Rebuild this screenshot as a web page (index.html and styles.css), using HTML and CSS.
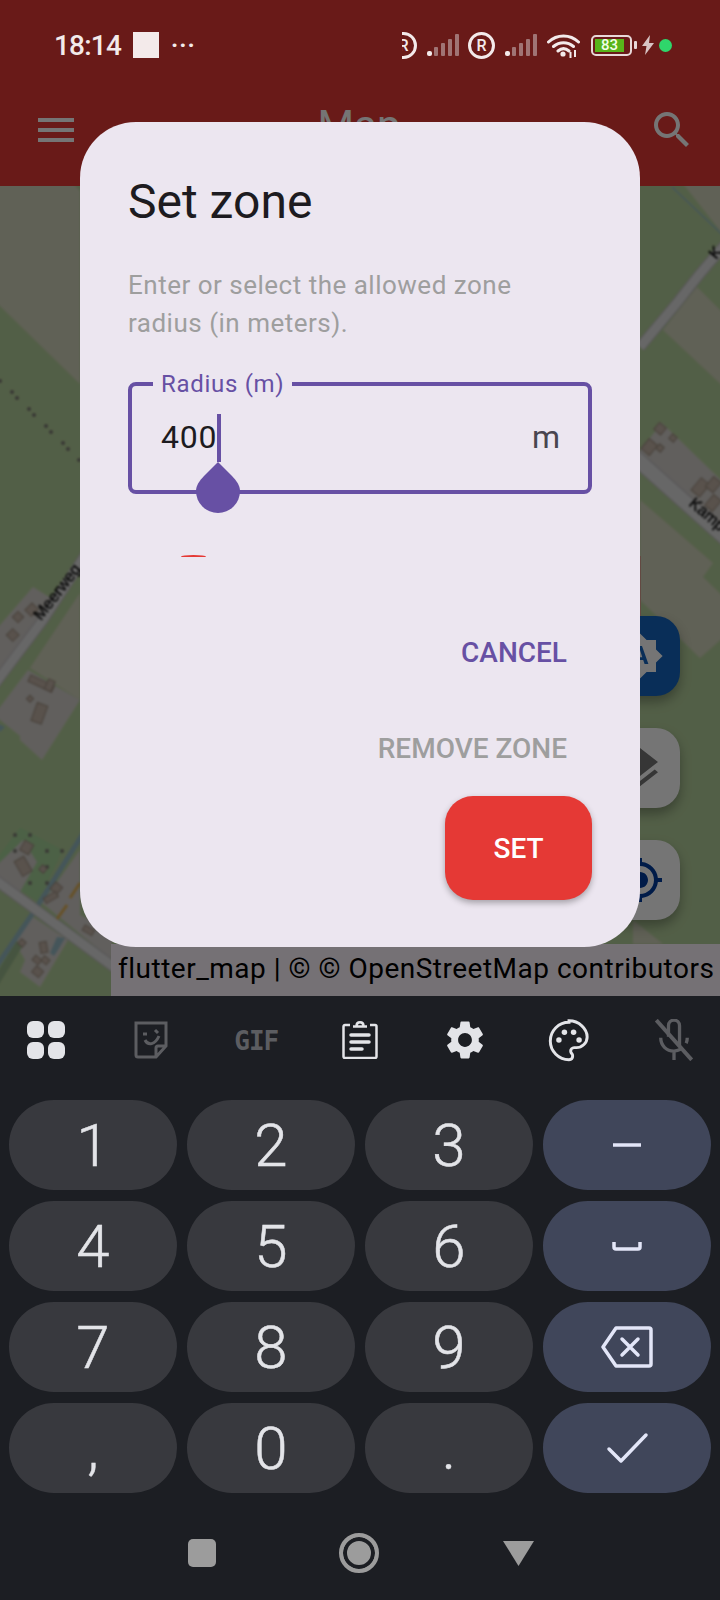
FILE: index.html
```html
<!DOCTYPE html>
<html lang="en">
<head>
    <meta charset="UTF-8">
    <meta name="viewport" content="width=device-width, initial-scale=1.0">
    <title>Map</title>
    <link rel="stylesheet" href="styles.css">
</head>
<body>
<div class="screen">
    <div class="app">
        <header class="header">
            <div class="status">
                <span class="time">18:14</span>
                <span class="status-box"></span>
                <span class="status-dots">···</span>
                <div class="status-right">
                    <div class="r-clip"><span class="r-mark">R</span></div>
                    <svg class="signal" viewBox="0 0 33 22">
                        <rect class="on" x="0" y="17" width="5" height="5" rx="2"/>
                        <rect class="off" x="7" y="13" width="4" height="9" rx="1"/>
                        <rect class="off" x="14" y="9" width="4" height="13" rx="1"/>
                        <rect class="off" x="21" y="5" width="4" height="17" rx="1"/>
                        <rect class="off" x="28" y="0" width="4" height="22" rx="1"/>
                    </svg>
                    <span class="r-mark second-sim">R</span>
                    <svg class="signal" viewBox="0 0 33 22">
                        <rect class="on" x="0" y="17" width="5" height="5" rx="2"/>
                        <rect class="off" x="7" y="13" width="4" height="9" rx="1"/>
                        <rect class="off" x="14" y="9" width="4" height="13" rx="1"/>
                        <rect class="off" x="21" y="5" width="4" height="17" rx="1"/>
                        <rect class="off" x="28" y="0" width="4" height="22" rx="1"/>
                    </svg>
                    <svg class="wifi" viewBox="0 0 33 25">
                        <path d="M1.500 9C10 1 23 1 31.500 9M6.500 13.500c6-5 14-5 20 0M11 18c3.500-3 7.500-3 11 0"/>
                        <circle cx="16" cy="21" r="2.600"/>
                        <path class="wifi-arrows" d="M23.500 19v6M28 17v7"/>
                    </svg>
                    <div class="battery">
                        <div class="battery-body"><span class="battery-level">83</span></div>
                        <span class="battery-nub"></span>
                    </div>
                    <svg class="bolt" viewBox="0 0 12 20"><path d="M8 0 0 11h4.500L3 20l9-12H7z"/></svg>
                    <span class="green-dot"></span>
                </div>
            </div>
            <div class="appbar">
                <svg class="bar-icon" viewBox="0 0 24 24"><path d="M3 18h18v-2H3v2zm0-5h18v-2H3v2zm0-7v2h18V6H3z"/></svg>
                <span class="appbar-title">Map</span>
                <svg class="bar-icon" viewBox="0 0 24 24"><path d="M15.500 14h-.79l-.28-.27C15.410 12.590 16 11.110 16 9.500 16 5.910 13.090 3 9.500 3S3 5.910 3 9.500 5.910 16 9.500 16c1.610 0 3.090-.59 4.230-1.570l.27.28v.79l5 4.990L20.490 19l-4.990-5zm-6 0C7.010 14 5 11.990 5 9.500S7.010 5 9.500 5 14 7.010 14 9.500 11.990 14 9.500 14z"/></svg>
            </div>
        </header>

        <main class="map">
            <svg class="tiles" viewBox="-6 180 732 822">
                <rect class="meadow" x="-6" y="180" width="732" height="822"/>
                <!-- farmland plots -->
                <polygon class="farm" points="-6,180 70,180 80,191 80,384 0,306 -6,300"/>
                <polygon class="farm" points="680,180 726,180 726,238"/>
                <polygon class="farm" points="697,287 726,316 726,389 663,330"/>
                <polygon class="farm" points="640,500 713,563 703,577 726,599 726,635 700,658 640,600"/>
                <polygon class="farm" points="633,920 663,944 633,944"/>
                <polygon class="farm" points="80,593 30,668 80,700"/>
                <!-- residential blocks -->
                <polygon class="resi" points="640,450 662,423 726,485 726,530 640,472"/>
                <polygon class="resi" points="33,587 54,600 -6,690 -6,632"/>
                <polygon class="resi" points="28,670 80,700 42,760 20,740 20,736 -6,715"/>
                <polygon class="garden" points="20,827 63,850 38,902 20,890 37,862 23,840 0,870 -6,862"/>
                <polygon class="resi" points="23,840 37,862 20,892 -6,878 -6,868"/>
                <polygon class="resi" points="80,850 42,903 112,960 112,930 80,915"/>
                <polygon class="resi" points="30,915 15,943 25,960 20,972 40,987 68,940"/>
                <!-- water -->
                <path class="stream" d="M-6 970 33 913 84 832"/>
                <path class="stream-thin" d="M672 187 726 238"/>
                <polygon class="pond" points="50,953 57,937 65,938 58,950 54,956"/>
                <polygon class="pond" points="-6,722 5,727 0,732"/>
                <path class="wood" d="M-6 985 20 943"/>
                <!-- roads -->
                <path class="road-edge" d="M-6 685 43 620 90 548"/>
                <path class="road" d="M-6 685 43 620 90 548"/>
                <path class="road-edge" d="M640 347 677 303C687 290 700 272 726 244"/>
                <path class="road" d="M640 347 677 303C687 290 700 272 726 244"/>
                <path class="road-edge wide" d="M630 453 730 542"/>
                <path class="road wide" d="M630 453 730 542"/>
                <path class="road-edge" d="M-6 879 118 970"/>
                <path class="road" d="M-6 879 118 970"/>
                <path class="trees" d="M0 381h.01M12 392h.01M17 398h.01M29 409h.01M34 415h.01M46 426h.01M51 432h.01M63 443h.01M68 449h.01M79 460h.01"/>
                <path class="trees" d="M15 835h.01M30 835h.01M15 851h.01M47 851h.01M62 851h.01M47 867h.01M30 883h.01M47 883h.01"/>
                <path class="rail" d="M57 919 67 905M70 898 80 883"/>
                <!-- buildings -->
                <g class="house">
                    <rect x="656" y="424" width="9" height="9" transform="rotate(40 660 428)"/>
                    <rect x="644" y="441" width="11" height="13" transform="rotate(40 650 447)"/>
                    <rect x="657" y="445" width="6" height="6" transform="rotate(40 660 448)"/>
                    <rect x="670" y="435" width="6" height="6" transform="rotate(40 673 438)"/>
                    <rect x="695" y="479" width="11" height="16" transform="rotate(40 700 487)"/>
                    <rect x="708" y="478" width="10" height="13" transform="rotate(40 713 485)"/>
                    <rect x="708" y="496" width="10" height="14" transform="rotate(40 713 503)"/>
                    <rect x="27" y="605" width="9" height="10" transform="rotate(45 32 610)"/>
                    <rect x="14" y="613" width="8" height="8" transform="rotate(45 18 617)"/>
                    <rect x="8" y="630" width="9" height="9" transform="rotate(45 12 635)"/>
                    <rect x="28" y="680" width="26" height="7" transform="rotate(25 41 684)"/>
                    <rect x="46" y="680" width="7" height="11" transform="rotate(25 50 686)"/>
                    <rect x="28" y="696" width="5" height="5" transform="rotate(45 30 698)"/>
                    <rect x="34" y="704" width="11" height="19" transform="rotate(20 40 713)"/>
                    <rect x="22" y="842" width="10" height="11" transform="rotate(30 27 847)"/>
                    <rect x="18" y="858" width="11" height="17" transform="rotate(-30 23 867)"/>
                    <rect x="40" y="866" width="6" height="6" transform="rotate(40 43 869)"/>
                    <rect x="52" y="884" width="9" height="9" transform="rotate(40 57 888)"/>
                    <rect x="44" y="895" width="14" height="6" transform="rotate(-30 50 898)"/>
                    <rect x="19" y="940" width="6" height="6" transform="rotate(40 22 943)"/>
                    <rect x="40" y="942" width="7" height="11" transform="rotate(-10 43 947)"/>
                    <rect x="33" y="957" width="8" height="6" transform="rotate(40 37 960)"/>
                    <rect x="42" y="957" width="7" height="6" transform="rotate(40 45 960)"/>
                    <rect x="33" y="968" width="9" height="8" transform="rotate(40 38 972)"/>
                    <rect x="83" y="927" width="11" height="6" transform="rotate(30 88 930)"/>
                </g>
                <text class="street" transform="translate(41 621) rotate(-52)">Meerweg</text>
                <text class="street" transform="translate(688 505) rotate(40)">Kamp</text>
                <text class="street" transform="translate(716 260) rotate(-50)">K</text>
            </svg>

            <div class="map-fab blue">
                <svg viewBox="0 0 24 24"><path d="M10.850 12.650h2.300L12 9l-1.150 3.650zM20 8.690V4h-4.690L12 .69 8.690 4H4v4.690L.69 12 4 15.310V20h4.690L12 23.310 15.310 20H20v-4.690L23.310 12 20 8.690zM14.300 16l-.7-2h-3.200l-.7 2H7.800L11 7h2l3.200 9h-1.900z"/></svg>
            </div>
            <div class="map-fab second">
                <svg viewBox="0 0 24 24"><path d="M11.990 18.540l-7.370-5.730L3 14.070l9 7 9-7-1.630-1.270-7.380 5.740zM12 16l7.360-5.730L21 9l-9-7-9 7 1.630 1.270L12 16z"/></svg>
            </div>
            <div class="map-fab third">
                <svg viewBox="0 0 24 24"><path d="M12 8c-2.210 0-4 1.790-4 4s1.790 4 4 4 4-1.790 4-4-1.790-4-4-4zm8.940 3c-.46-4.170-3.770-7.480-7.940-7.940V1h-2v2.060C6.830 3.520 3.520 6.830 3.060 11H1v2h2.060c.46 4.170 3.770 7.480 7.940 7.940V23h2v-2.060c4.170-.46 7.480-3.770 7.940-7.940H23v-2h-2.060zM12 19c-3.870 0-7-3.130-7-7s3.130-7 7-7 7 3.130 7 7-3.130 7-7 7z"/></svg>
            </div>
            <div class="red-edge"></div>
            <div class="attribution">flutter_map | © © OpenStreetMap contributors</div>
        </main>

        <div class="scrim"></div>

        <section class="dialog">
            <h1 class="dialog-title">Set zone</h1>
            <p class="dialog-text">Enter or select the allowed zone radius (in meters).</p>
            <div class="field">
                <label class="field-label">Radius (m)</label>
                <span class="field-value">400</span>
                <span class="field-unit">m</span>
                <span class="caret"></span>
                <svg class="caret-handle" viewBox="0 0 44 51"><path d="M22 0 36 14C41 19 44 24 44 29A22 22 0 0 1 0 29C0 24 3 19 8 14Z"/></svg>
            </div>
            <div class="slider-tip"></div>
            <div class="actions">
                <button class="text-btn cancel">CANCEL</button>
                <button class="text-btn remove">REMOVE ZONE</button>
                <button class="set-btn">SET</button>
            </div>
        </section>
    </div>

    <div class="keyboard">
        <div class="kb-tools">
            <svg class="tool" viewBox="0 0 38 38">
                <rect x="0" y="0" width="17" height="17" rx="6"/><rect x="21" y="0" width="17" height="17" rx="6"/>
                <rect x="0" y="21" width="17" height="17" rx="6"/><rect x="21" y="21" width="17" height="17" rx="6"/>
            </svg>
            <svg class="tool line dim" viewBox="0 0 38 38">
                <path d="M4 2h30v23L24 36H6a2 2 0 0 1-2-2zM33 25h-7a2 2 0 0 0-2 2v8"/>
                <path d="M13 19c3 6 10 5 14-4" />
                <path d="M11 13h4M23 9l3 3"/>
            </svg>
            <span class="tool-gif">GIF</span>
            <svg class="tool line clipboard" viewBox="1 -1 36 38">
                <path d="M9 3H4a1.500 1.500 0 0 0-1.500 1.500v30A1.500 1.500 0 0 0 4 36h30a1.500 1.500 0 0 0 1.500-1.500v-30A1.500 1.500 0 0 0 34 3h-5"/>
                <path d="M12 4.500h14M15.500 4c0-5 7-5 7 0"/>
                <path class="thick" d="M10 13h18M10 20h18M10 27h11"/>
            </svg>
            <svg class="tool gear" viewBox="0 0 24 24"><path d="M19.140 12.940c.04-.3.06-.61.06-.94 0-.32-.02-.64-.07-.94l2.030-1.580c.18-.14.23-.41.12-.61l-1.920-3.320c-.12-.22-.37-.29-.59-.22l-2.390.96c-.5-.38-1.030-.7-1.620-.94l-.36-2.540c-.04-.24-.24-.41-.48-.41h-3.840c-.24 0-.43.17-.47.41l-.36 2.540c-.59.24-1.130.57-1.620.94l-2.390-.96c-.22-.08-.47 0-.59.22L2.740 8.870c-.12.21-.08.47.12.61l2.030 1.580c-.05.3-.09.63-.09.94s.02.64.07.94l-2.030 1.580c-.18.14-.23.41-.12.61l1.920 3.320c.12.22.37.29.59.22l2.390-.96c.5.38 1.030.7 1.620.94l.36 2.540c.05.24.24.41.48.41h3.840c.24 0 .44-.17.47-.41l.36-2.540c.59-.24 1.130-.56 1.620-.94l2.390.96c.22.08.47 0 .59-.22l1.920-3.320c.12-.22.07-.47-.12-.61l-2.010-1.580zM12 15.600c-1.980 0-3.600-1.620-3.600-3.600s1.620-3.600 3.600-3.600 3.600 1.620 3.600 3.600-1.620 3.600-3.600 3.600z"/></svg>
            <svg class="tool palette" viewBox="0 0 24 24">
                <path class="palette-edge" d="M12 1.800C6.400 1.800 1.800 6.400 1.800 12S6.400 22.200 12 22.200c1.200 0 2-.8 2-2 0-.5-.2-1-.5-1.300-.4-.4-.6-.9-.6-1.400 0-1 .8-1.900 1.900-1.900H16c3.200 0 5.900-2.600 5.900-5.800 0-4.500-4.400-8.800-9.900-8.800z"/>
                <circle cx="6.500" cy="11.500" r="1.500"/><circle cx="9.500" cy="7.200" r="1.500"/>
                <circle cx="14.500" cy="7.200" r="1.500"/><circle cx="17.500" cy="11.500" r="1.500"/>
            </svg>
            <svg class="tool line dim mic" viewBox="0 0 38 38">
                <path d="M14 16V6a5 5 0 0 1 10 0v18"/>
                <path d="M7 17c0 7 5 12 12 12 3 0 5-1 7-2M31 17c0 2-.5 4-1 5M19 29v8"/>
                <path class="slash" d="M3 1 35 37"/>
            </svg>
        </div>

        <div class="kb-keys">
            <div class="key">1</div><div class="key">2</div><div class="key">3</div>
            <div class="key accent"><svg class="key-icon" viewBox="0 0 40 40"><path d="M6 20h28"/></svg></div>
            <div class="key">4</div><div class="key">5</div><div class="key">6</div>
            <div class="key accent"><svg class="key-icon" viewBox="0 0 40 40"><path d="M7 16v5a2 2 0 0 0 2 2h22a2 2 0 0 0 2-2v-5"/></svg></div>
            <div class="key">7</div><div class="key">8</div><div class="key">9</div>
            <div class="key accent"><svg class="key-icon large" viewBox="0 0 52 42"><path d="M15 2h33a2 2 0 0 1 2 2v34a2 2 0 0 1-2 2H15L2 21z"/><path d="M21 13l16 16M37 13 21 29"/></svg></div>
            <div class="key">,</div><div class="key">0</div><div class="key">.</div>
            <div class="key accent"><svg class="key-icon large" viewBox="0 0 52 42"><path d="M8 22l12 12L45 8"/></svg></div>
        </div>

        <nav class="navbar">
            <span class="nav-square"></span>
            <span class="nav-circle"></span>
            <svg class="nav-back" viewBox="0 0 33 27"><path d="M1 1h31L16.500 26z"/></svg>
        </nav>
    </div>
</div>
</body>
</html>
```

FILE: styles.css
```css
* {
    box-sizing: border-box;
}

body {
    margin: 0;
    font-family: 'Roboto', sans-serif;
    background-color: #1c1e23;
}

.screen {
    width: 720px;
    height: 1600px;
    overflow: hidden;
    display: flex;
    flex-direction: column;
}

.app {
    position: relative;
    height: 996px;
    display: flex;
    flex-direction: column;
}

/* Header with status bar and app bar */
.header {
    height: 186px;
    background-color: #e53935;
}

.status {
    position: relative;
    z-index: 2;
    height: 74px;
    padding: 16px 48px 0 54px;
    display: flex;
    align-items: center;
    color: #f3eaea;
}

.time {
    width: 79px;
    font-size: 28px;
    font-weight: 500;
    letter-spacing: -0.8px;
}

.status-box {
    width: 26px;
    height: 26px;
    background-color: #f3eaea;
}

.status-dots {
    margin-left: 12px;
    font-size: 24px;
    font-weight: 700;
    letter-spacing: 1px;
}

.status-right {
    margin-left: auto;
    display: flex;
    align-items: center;
    gap: 10px;
}

.r-clip {
    width: 15px;
    height: 27px;
    overflow: hidden;
    position: relative;
}

.r-clip .r-mark {
    position: absolute;
    right: 0;
    top: 0;
}

.r-mark {
    width: 27px;
    height: 27px;
    border: 3px solid #f3eaea;
    border-radius: 50%;
    display: flex;
    align-items: center;
    justify-content: center;
    font-size: 16px;
    font-weight: 500;
}

.r-mark.second-sim {
    margin-left: -2px;
}

.signal {
    width: 33px;
    height: 22px;
}

.signal .on {
    fill: #f3eaea;
}

.signal .off {
    fill: #a07474;
}

.wifi {
    width: 33px;
    height: 25px;
    margin-left: -1px;
    margin-right: 1px;
    fill: #f3eaea;
}

.wifi path {
    fill: none;
    stroke: #f3eaea;
    stroke-width: 3;
    stroke-linecap: round;
}

.wifi .wifi-arrows {
    stroke-width: 2;
    stroke-linecap: butt;
}

.battery {
    display: flex;
    align-items: center;
    gap: 2px;
}

.battery-body {
    width: 41px;
    height: 21px;
    border: 2px solid #e8d8d8;
    border-radius: 5px;
    padding: 2px;
    display: flex;
}

.battery-level {
    width: 29px;
    background-color: #58b41a;
    color: #f3ffe8;
    font-size: 15px;
    font-weight: 500;
    line-height: 13px;
    text-align: center;
}

.battery-nub {
    width: 3px;
    height: 8px;
    border-radius: 1px;
    background-color: #e8d8d8;
}

.bolt {
    width: 12px;
    height: 20px;
    margin-left: -5px;
    fill: #d8c4c4;
}

.green-dot {
    width: 13px;
    height: 13px;
    margin-left: -5px;
    border-radius: 50%;
    background-color: #2fd66b;
}

.appbar {
    padding: 8px 24px 0 32px;
    height: 112px;
    display: flex;
    align-items: flex-start;
    justify-content: space-between;
    color: #fff;
}

.appbar .bar-icon {
    margin-top: 24px;
    width: 48px;
    height: 48px;
    fill: #fff;
}

.appbar-title {
    margin-top: 16px;
    margin-right: 10px;
    font-size: 42px;
    line-height: 56px;
}

/* Map and its buttons */
.map {
    position: relative;
    flex: 1;
    overflow: hidden;
}

.tiles {
    display: block;
    width: 732px;
    height: 822px;
    margin: -6px;
    filter: blur(1px) brightness(0.88);
}

.meadow { fill: #cdebb0; }
.farm { fill: #eef0d5; }
.resi { fill: #f0ebe6; }
.garden { fill: #bdf0ae; }

.stream, .stream-thin, .wood, .road, .road-edge, .trees, .rail {
    fill: none;
}

.stream { stroke: #aad3df; stroke-width: 5; }
.stream-thin { stroke: #aad3df; stroke-width: 1.500; }
.pond { fill: #aad3df; }
.wood { stroke: #add19e; stroke-width: 8; }
.road { stroke: #fff; stroke-width: 9; }
.road.wide { stroke-width: 14; }
.road-edge { stroke: #d4d0d4; stroke-width: 11; }
.road-edge.wide { stroke-width: 16; }
.trees { stroke: #8a8880; stroke-width: 4; stroke-linecap: round; }
.rail { stroke: #ffc860; stroke-width: 3; }
.house { fill: #dccabc; stroke: #b0a090; stroke-width: 1; }

.street {
    font-family: 'Liberation Sans', sans-serif;
    font-size: 16px;
    fill: #000;
    stroke: #000;
    stroke-width: 0.3;
}

.map-fab {
    position: absolute;
    left: 600px;
    width: 80px;
    height: 80px;
    border-radius: 24px;
    background-color: #fff;
    box-shadow: 0 6px 12px rgba(0, 0, 0, 0.3);
    display: flex;
    align-items: center;
    justify-content: center;
}

.map-fab svg {
    width: 48px;
    height: 48px;
}

.map-fab.blue {
    top: 430px;
    background-color: #1565c0;
}

.map-fab.blue svg { fill: #fff; }

.map-fab.second { top: 542px; }
.map-fab.second svg { fill: #777; }

.map-fab.third { top: 654px; }
.map-fab.third svg { fill: #003c9e; }

.red-edge {
    position: absolute;
    left: 620px;
    top: 370px;
    width: 21px;
    height: 60px;
    background-color: #d8a090;
}

.attribution {
    position: absolute;
    right: 0;
    bottom: 0;
    width: 609px;
    height: 52px;
    padding-left: 7px;
    background-color: #fff6ff;
    color: #000;
    font-size: 28px;
    line-height: 50px;
    letter-spacing: 0.5px;
    white-space: nowrap;
}

.scrim {
    position: absolute;
    inset: 0;
    z-index: 1;
    background-color: rgba(0, 0, 0, 0.54);
}

/* Zone dialog */
.dialog {
    position: absolute;
    z-index: 3;
    left: 80px;
    top: 122px;
    width: 560px;
    height: 825px;
    padding: 44px 48px 0;
    border-radius: 56px;
    background-color: #ece6f0;
}

.dialog-title {
    margin: 0;
    font-size: 48px;
    font-weight: 400;
    line-height: 72px;
    color: #1d1b20;
}

.dialog-text {
    margin: 28px 0 0;
    font-size: 26px;
    line-height: 38px;
    letter-spacing: 0.5px;
    color: #9e9e9e;
}

.field {
    position: relative;
    margin-top: 40px;
    height: 112px;
    padding: 0 28px 0 29px;
    border: 4px solid #6750a4;
    border-radius: 8px;
    display: flex;
    align-items: center;
    justify-content: space-between;
    font-size: 32px;
}

.field-label {
    position: absolute;
    left: 21px;
    top: -16px;
    padding: 0 8px;
    background-color: #ece6f0;
    color: #6750a4;
    font-size: 24px;
    line-height: 28px;
    letter-spacing: 0.7px;
}

.field-value {
    margin-top: -2px;
    color: #1d1b20;
    letter-spacing: 0.8px;
}

.field-unit {
    margin-top: -2px;
    color: #49454f;
}

.caret {
    position: absolute;
    left: 85px;
    top: 28px;
    width: 4px;
    height: 48px;
    background-color: #6750a4;
}

.caret-handle {
    position: absolute;
    left: 64px;
    top: 76px;
    width: 44px;
    height: 51px;
    fill: #6750a4;
}

.slider-tip {
    position: absolute;
    left: 101px;
    top: 433px;
    width: 25px;
    height: 2px;
    border-radius: 13px 13px 0 0 / 2px 2px 0 0;
    background-color: #e53935;
}

.actions {
    margin-top: 118px;
    display: flex;
    flex-direction: column;
    align-items: flex-end;
}

.text-btn {
    height: 80px;
    padding: 0 25px;
    border: none;
    background: none;
    font-family: inherit;
    font-size: 28px;
    font-weight: 500;
}

.cancel {
    color: #6750a4;
}

.remove {
    margin-top: 16px;
    color: #9e9e9e;
}

.set-btn {
    margin-top: 8px;
    width: 147px;
    height: 104px;
    border: none;
    border-radius: 28px;
    background-color: #e53935;
    box-shadow: 0 3px 6px rgba(0, 0, 0, 0.3);
    color: #fff;
    font-family: inherit;
    font-size: 28px;
    font-weight: 500;
}

/* Keyboard */
.keyboard {
    flex: 1;
    background-color: #1c1e23;
    color: #e3e4e8;
}

.kb-tools {
    height: 104px;
    padding: 25px 25px 0;
    display: flex;
    align-items: flex-start;
    justify-content: space-between;
}

.tool {
    width: 38px;
    height: 38px;
    margin: 0 2px;
    fill: #e3e4e8;
}

.tool.line {
    fill: none;
    stroke: #e3e4e8;
    stroke-width: 2.500;
}

.tool.line.dim {
    stroke: #5c5d61;
    stroke-width: 3;
}

.tool .thick {
    stroke-width: 3.500;
    stroke-linecap: round;
}

.tool .slash {
    stroke-width: 3.500;
}

.tool.clipboard {
    width: 36px;
    margin: 0 3px;
}

.tool.gear {
    width: 46px;
    height: 46px;
    margin: -4px -2px 0;
}

.tool.palette {
    width: 44px;
    height: 44px;
    margin: -2px -1px 0;
}

.tool.mic {
    width: 42px;
    height: 42px;
    margin: -2px 0 0;
}

.tool-gif {
    width: 42px;
    padding-top: 5px;
    text-align: center;
    white-space: nowrap;
    color: #5c5d61;
    font-family: 'DejaVu Sans Mono', monospace;
    font-size: 26px;
    font-weight: 700;
    letter-spacing: -1px;
}

.palette circle {
    fill: #e3e4e8;
}

.palette .palette-edge {
    fill: none;
    stroke: #e3e4e8;
    stroke-width: 1.600;
}

.kb-keys {
    padding: 0 9px;
    display: grid;
    grid-template-columns: repeat(4, 168px);
    grid-auto-rows: 90px;
    column-gap: 10px;
    row-gap: 11px;
}

.key {
    border-radius: 45px;
    background-color: #38393e;
    display: flex;
    align-items: center;
    justify-content: center;
    font-family: 'Roboto', sans-serif;
    font-size: 60px;
    font-weight: 300;
    -webkit-text-stroke: 0.5px #e3e4e8;
}

.key.accent {
    background-color: #40465a;
}

.key-icon {
    width: 40px;
    height: 40px;
    fill: none;
    stroke: #e3e6f8;
    stroke-width: 3.500;
}

.key-icon.large {
    width: 52px;
    height: 42px;
    stroke-width: 3.500;
    stroke-linejoin: round;
    stroke-linecap: round;
}

.navbar {
    height: 107px;
    padding: 13px 0 0 3px;
    display: flex;
    align-items: center;
    justify-content: center;
    gap: 123px;
}

.nav-square {
    width: 28px;
    height: 28px;
    border-radius: 5px;
    background-color: #9c9c9c;
}

.nav-circle {
    width: 40px;
    height: 40px;
    border: 4px solid #9c9c9c;
    border-radius: 50%;
    background-color: #9c9c9c;
    box-shadow: inset 0 0 0 4px #1c1e23;
}

.nav-back {
    width: 33px;
    height: 27px;
    fill: #9c9c9c;
}
```
